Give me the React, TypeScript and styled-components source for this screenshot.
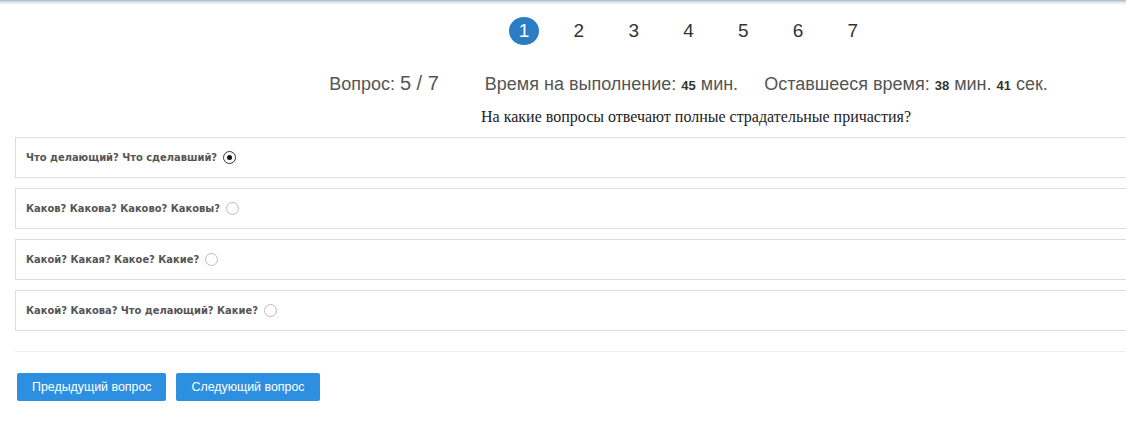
import React, { useState } from 'react';
import styled, { createGlobalStyle } from 'styled-components';

const GlobalStyle = createGlobalStyle`
  html, body {
    margin: 0;
    padding: 0;
    background: #fff;
    overflow: hidden;
  }
  body {
    font-family: "Liberation Sans", Arial, sans-serif;
  }
`;

const TopShade = styled.div`
  height: 5px;
  background: linear-gradient(to bottom, #9fb6c6 0%, #d9e3ea 40%, #ffffff 100%);
`;

const Page = styled.div`
  width: 1347px;
  padding-left: 15px;
`;

const Pager = styled.ul`
  list-style: none;
  margin: 12px 0 0;
  padding: 0;
  display: flex;
  justify-content: center;
`;

const PageItem = styled.li<{ $active?: boolean }>`
  width: 54.8px;
  height: 28px;
  display: flex;
  align-items: center;
  justify-content: center;
  font-size: 19px;
  color: ${(p) => (p.$active ? '#fff' : '#333')};

  span {
    width: 30px;
    height: 28px;
    border-radius: 50%;
    display: flex;
    align-items: center;
    justify-content: center;
    background: ${(p) => (p.$active ? '#2a7dc2' : 'transparent')};
  }
`;

const InfoLine = styled.div`
  margin-top: 27px;
  display: flex;
  justify-content: center;
  align-items: baseline;
  color: #555;
  font-size: 18px;
`;

const InfoItem = styled.div<{ $gap?: number }>`
  margin-right: ${(p) => p.$gap ?? 0}px;
  white-space: nowrap;
`;

const Big = styled.span`
  font-size: 20px;
`;

const Num = styled.b`
  font-size: 13px;
  color: #333;
`;

const Question = styled.div`
  margin-top: 13px;
  text-align: center;
  font-family: "Liberation Serif", "Times New Roman", serif;
  font-size: 16px;
  color: #222;
  padding-left: 15px;
`;

const Answers = styled.div`
  margin-top: 11px;
  display: flex;
  flex-direction: column;
  gap: 10px;
`;

const Answer = styled.label`
  height: 39px;
  border: 1px solid #ddd;
  display: flex;
  align-items: center;
  padding-left: 10px;
  font-family: "DejaVu Sans Condensed", Tahoma, "DejaVu Sans", sans-serif;
  font-weight: bold;
  font-size: 11px;
  color: #555;
  cursor: pointer;
`;

const Radio = styled.span<{ $checked: boolean }>`
  width: 11px;
  height: 11px;
  margin-left: 6px;
  border-radius: 50%;
  border: 1px solid ${(p) => (p.$checked ? '#333' : '#bbb')};
  background: #fff;
  display: flex;
  align-items: center;
  justify-content: center;

  &::after {
    content: '';
    width: 5px;
    height: 5px;
    border-radius: 50%;
    background: ${(p) => (p.$checked ? '#111' : 'transparent')};
  }
`;

const Divider = styled.hr`
  border: 0;
  border-top: 1px solid #eee;
  margin: 20px 0 0;
`;

const Buttons = styled.div`
  margin-top: 21px;
  padding-left: 2px;
  display: flex;
  gap: 10px;
`;

const Button = styled.button`
  height: 28px;
  padding: 0 15px;
  border: 0;
  border-radius: 2px;
  background: #2d8fe0;
  color: #fff;
  font-family: "Liberation Sans", Arial, sans-serif;
  font-size: 12.4px;
  cursor: pointer;
`;

const options = [
  'Что делающий? Что сделавший?',
  'Каков? Какова? Каково? Каковы?',
  'Какой? Какая? Какое? Какие?',
  'Какой? Какова? Что делающий? Какие?',
];

const App: React.FC = () => {
  const [selected, setSelected] = useState(0);

  return (
    <>
      <GlobalStyle />
      <TopShade />
      <Page>
        <Pager>
          {[1, 2, 3, 4, 5, 6, 7].map((n) => (
            <PageItem key={n} $active={n === 1}>
              <span>{n}</span>
            </PageItem>
          ))}
        </Pager>

        <InfoLine>
          <InfoItem $gap={46}>
            Вопрос: <Big>5 / 7</Big>
          </InfoItem>
          <InfoItem $gap={26}>
            Время на выполнение: <Num>45</Num> мин.
          </InfoItem>
          <InfoItem>
            Оставшееся время: <Num>38</Num> мин. <Num>41</Num> сек.
          </InfoItem>
        </InfoLine>

        <Question>На какие вопросы отвечают полные страдательные причастия?</Question>

        <Answers>
          {options.map((text, i) => (
            <Answer key={text} onClick={() => setSelected(i)}>
              {text}
              <Radio $checked={selected === i} />
            </Answer>
          ))}
        </Answers>

        <Divider />

        <Buttons>
          <Button>Предыдущий вопрос</Button>
          <Button>Следующий вопрос</Button>
        </Buttons>
      </Page>
    </>
  );
};

export default App;
